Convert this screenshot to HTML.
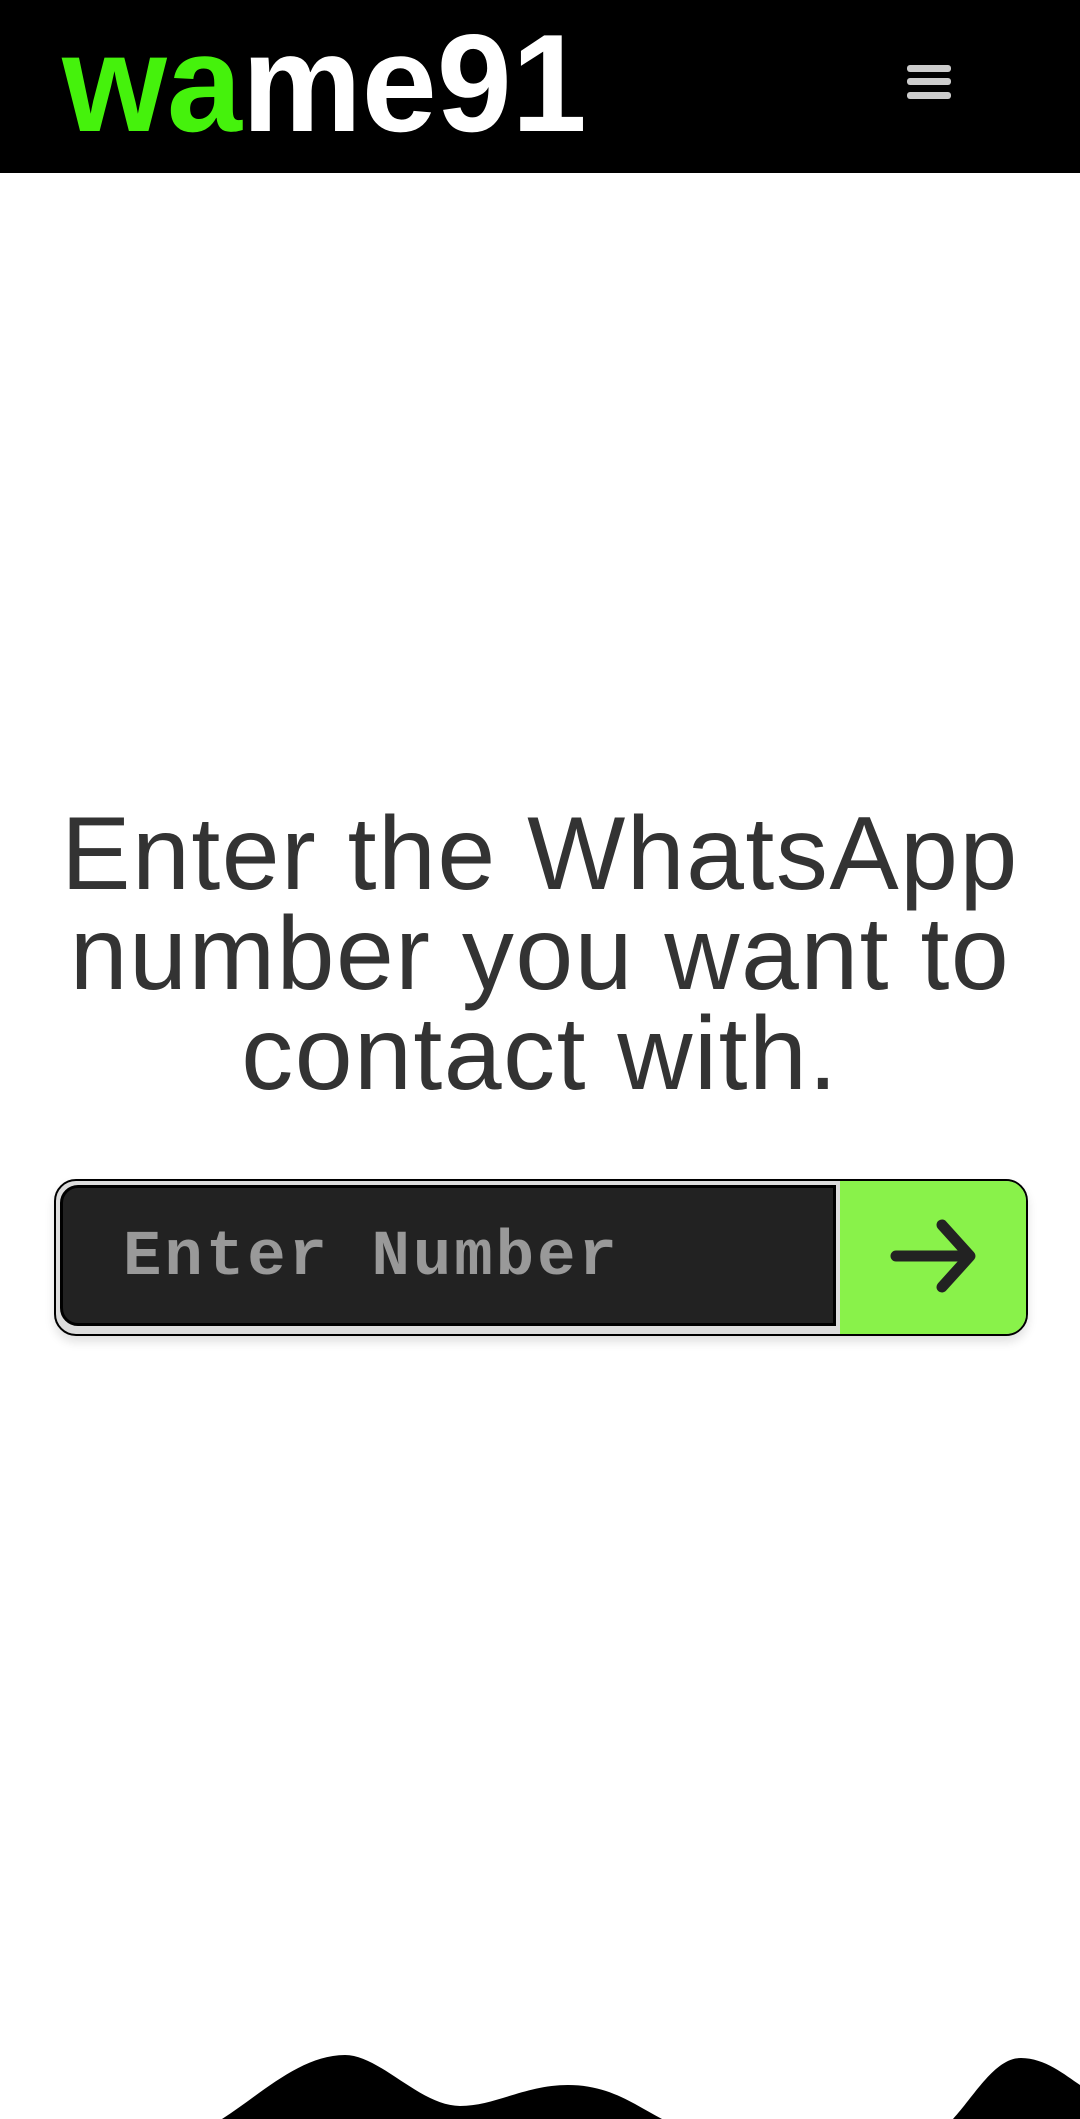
<!DOCTYPE html>
<html><head><meta charset="utf-8"><style>
html,body{margin:0;padding:0;}
body{width:1080px;height:2119px;background:#fff;position:relative;overflow:hidden;font-family:"Liberation Sans",sans-serif;}
.hdr{position:absolute;left:0;top:0;width:1080px;height:173px;background:#000;}
.logo{position:absolute;left:62px;top:-6px;font-weight:bold;font-size:139px;line-height:180px;color:#fff;transform:scaleX(0.97);transform-origin:0 0;white-space:nowrap;letter-spacing:0px;}
.logo span{color:#45f20c;}
.bar{position:absolute;left:907px;width:44px;height:7px;border-radius:3px;background:#ccc;}
h1{position:absolute;left:0;top:804px;width:1080px;margin:0;text-align:center;font-weight:normal;font-size:104px;line-height:100px;color:#333;letter-spacing:1.5px;}
.box{position:absolute;left:54px;top:1179px;width:970px;height:153px;border:2px solid #000;border-radius:22px;background:#ddd;box-shadow:0 6px 10px rgba(0,0,0,.12);overflow:hidden;}
.inp{position:absolute;left:4px;top:4px;width:776px;height:141px;background:#222;border:3px solid #000;border-radius:18px 0 0 18px;box-sizing:border-box;}
.inp div{position:absolute;left:60px;top:34px;font-family:"Liberation Mono",monospace;font-weight:bold;font-size:64px;letter-spacing:3px;color:#999;}
.btn{position:absolute;left:784px;top:0;width:186px;height:153px;background:#89f24a;}
</style></head><body>
<div class="hdr">
<div class="logo"><span>wa</span>me91</div>
<div class="bar" style="top:65px"></div>
<div class="bar" style="top:78px"></div>
<div class="bar" style="top:92px"></div>
</div>
<h1>Enter the WhatsApp<br>number you want to<br>contact with.</h1>
<div class="box">
<div class="inp"><div>Enter Number</div></div>
<div class="btn"><svg width="186" height="153" viewBox="0 0 186 153"><path d="M56 75H126M102 44L130 75L102 106" fill="none" stroke="#222" stroke-width="11" stroke-linecap="round" stroke-linejoin="round"/></svg></div>
</div>
<svg style="position:absolute;left:0;top:2040px" width="1080" height="79" viewBox="0 2040 1080 79">
<path d="M222 2119C260 2095 300 2055 345 2055C380 2055 420 2106 460 2106C495 2106 525 2085 568 2085C610 2085 635 2105 662 2119Z" fill="#000"/>
<path d="M953 2119C975 2095 995 2058 1021 2058C1045 2058 1065 2075 1080 2085V2119Z" fill="#000"/>
</svg>
</body></html>
